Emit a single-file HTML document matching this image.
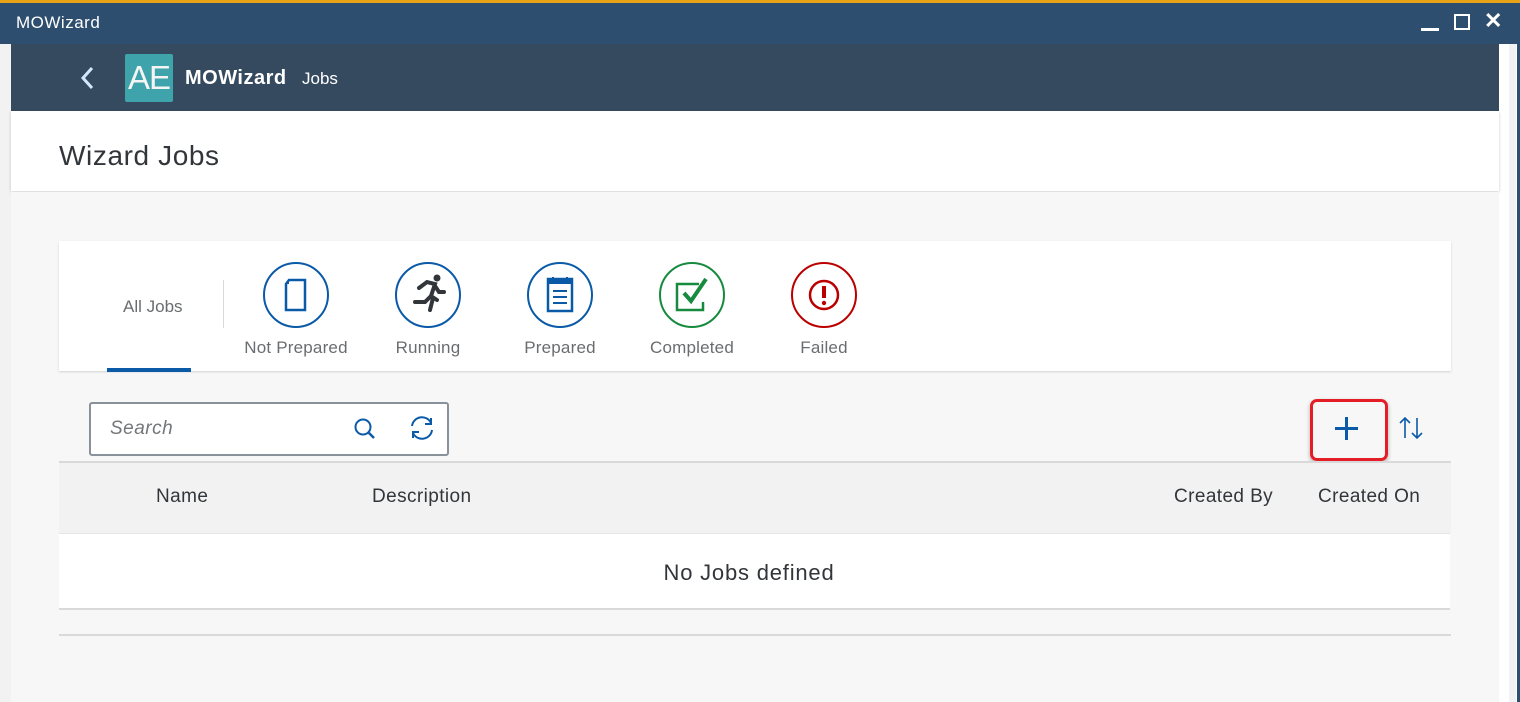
<!DOCTYPE html>
<html><head><style>
*{box-sizing:border-box;margin:0;padding:0}
body{width:1520px;height:702px;overflow:hidden;background:#fff;font-family:"Liberation Sans",sans-serif;position:relative}
.abs{position:absolute}
.lbl{position:absolute;font-size:17px;color:#6a6d70;text-align:center;width:130px;letter-spacing:0.2px}
.circ{position:absolute;width:66px;height:66px;border-radius:50%;border:2px solid #0a5aa8;top:262px}
.th{position:absolute;top:486px;font-size:19px;color:#32363a;letter-spacing:0.4px}
</style></head><body>
<div class="abs" style="left:0;top:0;width:1520px;height:3px;background:#e8a317"></div>
<div class="abs" style="left:0;top:3px;width:1520px;height:41px;background:#2d4e6e"></div>
<div class="abs" style="left:16px;top:13px;color:#fff;font-size:17px;letter-spacing:0.5px">MOWizard</div>
<div class="abs" style="left:1421px;top:28px;width:18px;height:3px;background:#fff"></div>
<div class="abs" style="left:1454px;top:14px;width:16px;height:16px;border:2.5px solid #fff"></div>
<div class="abs" style="left:1484px;top:8px;color:#fff;font-size:22px;font-weight:bold">✕</div>
<div class="abs" style="left:0;top:44px;width:11px;height:658px;background:#f2f2f2"></div>
<div class="abs" style="left:1509px;top:44px;width:7px;height:658px;background:#f2f2f2"></div>
<div class="abs" style="left:1517px;top:44px;width:3px;height:658px;background:#2d4e6e"></div>
<div class="abs" style="left:11px;top:44px;width:1488px;height:67px;background:#354a5f"></div>
<svg class="abs" style="left:78px;top:66px" width="18" height="24"><path d="M14 2 L5 12 L14 22" stroke="#d1e8ff" stroke-width="3" fill="none"/></svg>
<div class="abs" style="left:125px;top:54px;width:48px;height:48px;background:#3ea3aa;border-radius:2px;color:#f4f4f4;font-size:33px;line-height:48px;text-align:center;letter-spacing:-1px">AE</div>
<div class="abs" style="left:185px;top:67px;color:#fff;font-size:20px;font-weight:bold;letter-spacing:0.5px">MOWizard</div>
<div class="abs" style="left:302px;top:69px;color:#fff;font-size:17px">Jobs</div>
<div class="abs" style="left:11px;top:111px;width:1488px;height:80px;background:#fff;box-shadow:0 1px 3px rgba(0,0,0,.2)"></div>
<div class="abs" style="left:59px;top:140px;font-size:28px;color:#32363a;letter-spacing:0.6px">Wizard Jobs</div>
<div class="abs" style="left:11px;top:192px;width:1488px;height:510px;background:#f7f7f7"></div>
<div class="abs" style="left:59px;top:241px;width:1392px;height:130px;background:#fff;box-shadow:0 1px 2px rgba(0,0,0,.15)"></div>
<div class="abs" style="left:123px;top:297px;font-size:17px;color:#6a6d70">All Jobs</div>
<div class="abs" style="left:107px;top:368px;width:84px;height:4px;background:#0a5aa8"></div>
<div class="abs" style="left:223px;top:280px;width:1px;height:48px;background:#d9d9d9"></div>
<div class="circ" style="left:263px"><svg width="62" height="62"><path d="M24 16 H40 V46 H21 V20 Z" stroke="#0a5aa8" stroke-width="2.5" fill="none"/><path d="M21 20 L24 16 V20Z" fill="#0a5aa8"/></svg></div>
<div class="circ" style="left:395px"><svg width="62" height="62"><circle cx="40" cy="14" r="3.5" fill="#32363a"/><path d="M22 24 L30 18 L38 20 L34 32 L40 36 M38 22 L42 28 L47 28 M34 32 L28 38 L18 38 M36 34 L33 46" stroke="#32363a" stroke-width="4" fill="none" stroke-linecap="round"/></svg></div>
<div class="circ" style="left:527px"><svg width="62" height="62"><rect x="19" y="15" width="24" height="32" stroke="#0a5aa8" stroke-width="2.5" fill="none"/><rect x="19" y="15" width="24" height="5" fill="#0a5aa8"/><path d="M24 13v5M38 13v5" stroke="#0a5aa8" stroke-width="2"/><path d="M24 27h14M24 33h14M24 39h14" stroke="#0a5aa8" stroke-width="2"/></svg></div>
<div class="circ" style="left:659px;border-color:#188a3f"><svg width="62" height="62"><path d="M38 20 H16 V46 H42 V38" stroke="#188a3f" stroke-width="2.5" fill="none"/><path d="M23 29 L30 37 L45 15" stroke="#188a3f" stroke-width="4" fill="none"/></svg></div>
<div class="circ" style="left:791px;border-color:#bb0000"><svg width="62" height="62"><circle cx="31" cy="31" r="14" stroke="#bb0000" stroke-width="2.5" fill="none"/><path d="M31 22 V34" stroke="#bb0000" stroke-width="4"/><circle cx="31" cy="39" r="2.2" fill="#bb0000"/></svg></div>
<div class="lbl" style="left:231px;top:338px">Not Prepared</div>
<div class="lbl" style="left:363px;top:338px">Running</div>
<div class="lbl" style="left:495px;top:338px">Prepared</div>
<div class="lbl" style="left:627px;top:338px">Completed</div>
<div class="lbl" style="left:759px;top:338px">Failed</div>
<div class="abs" style="left:89px;top:402px;width:360px;height:54px;background:#fff;border:2px solid #89919a;border-radius:3px"></div>
<div class="abs" style="left:110px;top:418px;font-size:19px;font-style:italic;color:#74777a;letter-spacing:0.5px">Search</div>
<svg class="abs" style="left:352px;top:416px" width="26" height="26"><circle cx="11" cy="11" r="7.5" stroke="#0a5aa8" stroke-width="2" fill="none"/><path d="M16.5 16.5 L22 22" stroke="#0a5aa8" stroke-width="2.5"/></svg>
<svg class="abs" style="left:408px;top:414px" width="28" height="28"><path d="M4 12 A10 10 0 0 1 23 9 M24 16 A10 10 0 0 1 5 19" stroke="#0a5aa8" stroke-width="2" fill="none"/><path d="M23 4 V10 H17 M5 24 V18 H11" stroke="#0a5aa8" stroke-width="2" fill="none"/></svg>
<div class="abs" style="left:1310px;top:399px;width:78px;height:62px;border:3px solid #e41e26;border-radius:7px;box-shadow:0 2px 4px rgba(0,0,0,.3)"></div>
<div class="abs" style="left:1335px;top:417px;width:24px;height:24px"><div class="abs" style="left:10px;top:0;width:3px;height:23px;background:#0a5aa8"></div><div class="abs" style="left:0;top:10px;width:23px;height:3px;background:#0a5aa8"></div></div>
<svg class="abs" style="left:1398px;top:415px" width="28" height="26"><path d="M7 23 V3 M2 8 L7 3 L12 8 M19 3 V23 M14 18 L19 23 L24 18" stroke="#0a5aa8" stroke-width="1.6" fill="none"/></svg>
<div class="abs" style="left:59px;top:461px;width:1392px;height:2px;background:#d9d9d9"></div>
<div class="abs" style="left:59px;top:463px;width:1392px;height:70px;background:#f2f2f2"></div>
<div class="th" style="left:156px">Name</div>
<div class="th" style="left:372px">Description</div>
<div class="th" style="left:1174px">Created By</div>
<div class="th" style="left:1318px">Created On</div>
<div class="abs" style="left:59px;top:533px;width:1391px;height:77px;background:#fff;border-top:1px solid #e5e5e5;border-bottom:2px solid #d9d9d9"></div>
<div class="abs" style="left:59px;top:560px;width:1380px;text-align:center;font-size:22px;color:#32363a;letter-spacing:0.8px">No Jobs defined</div>
<div class="abs" style="left:59px;top:634px;width:1392px;height:2px;background:#d9d9d9"></div>
</body></html>
